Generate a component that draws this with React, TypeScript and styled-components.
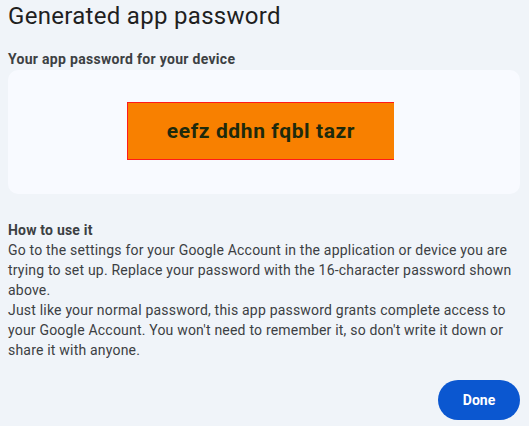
import React from 'react'
import styled, { createGlobalStyle } from 'styled-components'

const GlobalStyle = createGlobalStyle`
  html, body {
    margin: 0;
    padding: 0;
    background: #f0f4f9;
  }
  body {
    font-family: Roboto, "Open Sans", Arial, sans-serif;
    color: #1f1f1f;
  }
`

export default function App() {
  return (
    <S.Page>
      <GlobalStyle />
      <S.Title>Generated app password</S.Title>
      <S.Label>Your app password for your device</S.Label>
      <S.Card>
        <S.PasswordBox>eefz ddhn fqbl tazr</S.PasswordBox>
      </S.Card>
      <S.HowTo>
        <S.HowToHeader>How to use it</S.HowToHeader>
        <p>
          Go to the settings for your Google Account in the application or device you are trying to set up. Replace
          your password with the 16-character password shown above.
        </p>
        <p>
          Just like your normal password, this app password grants complete access to your Google Account. You won't
          need to remember it, so don't write it down or share it with anyone.
        </p>
      </S.HowTo>
      <S.Footer>
        <S.DoneButton>Done</S.DoneButton>
      </S.Footer>
    </S.Page>
  )
}

export const S = {
  Page: styled.div`
    display: flex;
    flex-direction: column;
    width: 529px;
    height: 426px;
    padding: 0 9px 0 8px;
    box-sizing: border-box;
  `,
  Title: styled.h1`
    margin: 0;
    padding-top: 1px;
    font-size: 24px;
    font-weight: 400;
    line-height: 30px;
    letter-spacing: 0.3px;
    color: #1f1f1f;
  `,
  Label: styled.div`
    margin-top: 19px;
    font-size: 14px;
    font-weight: 700;
    line-height: 18px;
    letter-spacing: 0.3px;
    color: #3c4043;
  `,
  Card: styled.div`
    display: flex;
    justify-content: center;
    margin-top: 2px;
    height: 124px;
    padding-top: 32px;
    box-sizing: border-box;
    background: #f8faff;
    border-radius: 10px;
  `,
  PasswordBox: styled.div`
    display: flex;
    align-items: center;
    justify-content: center;
    width: 267px;
    height: 58px;
    box-sizing: border-box;
    margin-right: 7px;
    background: #f88000;
    border: 1.5px solid #ff1a1a;
    border-right: none;
    font-size: 21px;
    font-weight: 700;
    letter-spacing: 0.6px;
    color: #1e2a0c;
  `,
  HowTo: styled.div`
    margin-top: 26px;
    font-size: 14px;
    line-height: 20px;
    letter-spacing: 0.2px;
    color: #3c4043;

    p {
      margin: 0;
    }
  `,
  HowToHeader: styled.div`
    font-weight: 700;
  `,
  Footer: styled.div`
    display: flex;
    justify-content: flex-end;
    margin-top: auto;
    padding-bottom: 6px;
  `,
  DoneButton: styled.button`
    width: 82px;
    height: 40px;
    border: none;
    border-radius: 20px;
    background: #0b57d0;
    color: #fff;
    font-family: inherit;
    font-size: 14px;
    font-weight: 700;
    cursor: pointer;
  `,
}
